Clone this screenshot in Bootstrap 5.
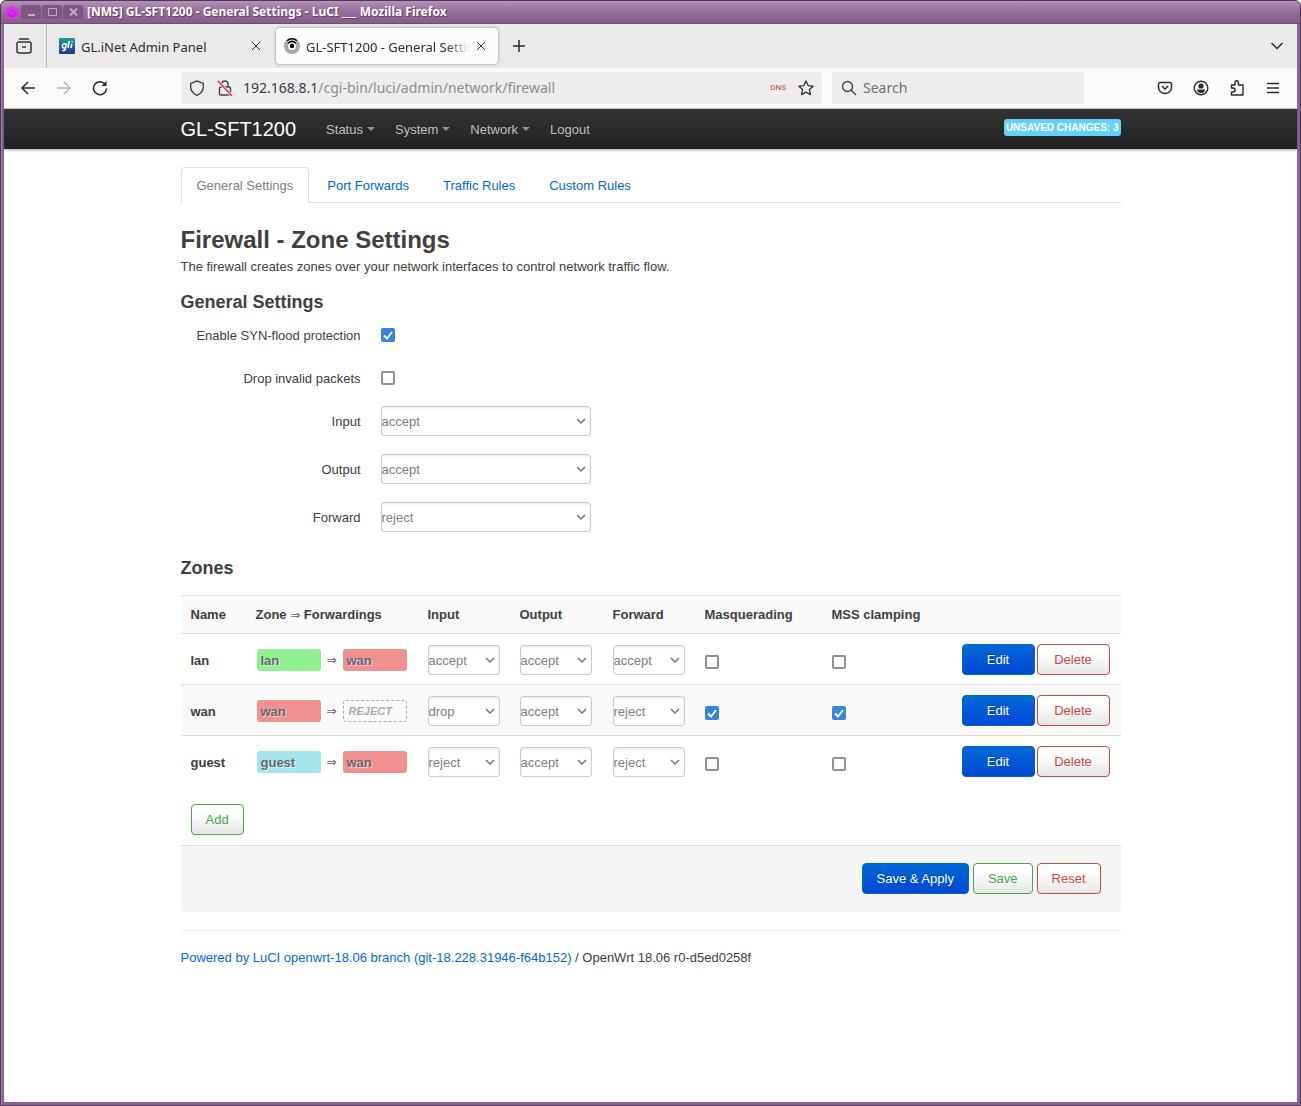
<!DOCTYPE html>
<html lang="en">
<head>
<meta charset="utf-8">
<meta name="viewport" content="width=device-width, initial-scale=1">
<title>GL-SFT1200 - General Settings - LuCI</title>
<link rel="stylesheet" href="https://cdn.jsdelivr.net/npm/bootstrap@5.3.0/dist/css/bootstrap.min.css">
<style>
  body { font-family: "Liberation Sans", Arial, sans-serif; font-size: 13px; line-height: 18px; color: #404040; background: #fff; }
  a { color: #0069d6; text-decoration: none; }
  svg { display: block; flex: none; }
  .ui-font { font-family: "Noto Sans", sans-serif; }

  /* window frame */
  .win { border: 1px solid #4f3455; padding: 0 3px 3px; background: #8c6693; border-radius: 6px 6px 0 0; box-shadow: inset 1px 0 0 #a581aa; min-height: 100vh; }
  .win-title { height: 23px; margin: 0 -3px; padding-left: 4px; background: linear-gradient(#b493b9, #9a729f 40%, #865c89); border-bottom: 1px solid #714a75; border-radius: 5px 5px 0 0; color: #fff; font-size: 12px; font-weight: 700; text-shadow: 1px 1px 1px #5a3a5e; }
  .win-btns { gap: 1px; margin: 0 4px 0 2px; }
  .win-btn { width: 20px; height: 14px; border: 0; border-radius: 2px; padding: 0; background: #7e5683; color: #c9a5cf; }
  .win-page { background: #fff; }

  /* browser tabs and toolbar */
  .strip { height: 44px; background: #eaeaea; color: #2b2a33; font-size: 13px; }
  .strip-first { width: 43px; border-right: 1px solid #bcbcbc; padding-left: 12px; }
  .tab-item { height: 36px; gap: 6px; padding: 0 12px 0 8px; border-radius: 4px; line-height: 20px; }
  .tab-item .tab-text { padding-top: 1px; }
  .tab-one { width: 222px; margin-left: 4px; }
  .tab-two { width: 222px; margin-left: 3px; background: #fcfcfc; box-shadow: 0 0 3px rgba(0,0,0,.45); }
  .tab-text { white-space: nowrap; overflow: hidden; }
  .tab-fade { -webkit-mask-image: linear-gradient(90deg, #000 85%, transparent); mask-image: linear-gradient(90deg, #000 85%, transparent); }
  .plain-btn { border: 0; background: none; padding: 0; color: #2b2a33; display: flex; align-items: center; justify-content: center; }
  .tool-btn { width: 36px; height: 32px; flex: none; }
  .new-tab { width: 32px; margin-left: 5px; }
  .list-tabs { width: 36px; margin: 0 2px 0 auto; }
  .toolbar-row { height: 41px; padding: 0 6px; background: #fbfbfb; border-bottom: 1px solid #ccc; }
  .field-box { height: 32px; background: #ededed; border-radius: 4px; font-size: 14px; color: #3a3a42; }
  .field-url { margin-left: 63px; padding: 0 8px; gap: 12px; }
  .field-url label { margin-left: -2px; }
  .field-find { width: 252px; margin: 0 63px 0 10px; padding: 0 9px; gap: 6px; }
  .field-box input { border: 0; background: none; padding: 0; outline: 0; color: #8c8c90; min-width: 0; }
  .field-box input::placeholder { color: #707075; opacity: 1; }
  .dns { font-family: Roboto, sans-serif; font-size: 8px; color: #c4474b; }

  /* site header */
  .site-nav { height: 40px; background: linear-gradient(#333, #222); box-shadow: 0 1px 3px rgba(0,0,0,.35); }
  .page-wrap { max-width: 940px; margin: 0 auto; }
  .site-nav .navbar-brand { font-size: 20px; line-height: 38px; color: #fff; margin: 0 20px 0 0; padding: 0; }
  .site-nav .nav-link { padding: 2px 10px 0; line-height: 38px; font-size: 13px; color: #bfbfbf; }
  .site-nav .dropdown-toggle::after { margin-left: 4px; border-width: 4px 4px 0; color: #8f8f8f; vertical-align: 3px; }
  .changes { background: #62cffc; color: #fff; font-size: 10px; font-weight: 700; line-height: 17px; padding: 0 2px; border-radius: 3px; margin-bottom: 3px; }

  /* content */
  .main-col { padding: 18px 0 120px; }
  .nav-tabs { border-color: #ddd; margin-bottom: 19px; }
  .nav-tabs .nav-link { padding: 2px 15px 0; line-height: 32px; margin-right: 2px; border-radius: 4px 4px 0 0; color: #0069d6; }
  .nav-tabs .nav-link.active { color: #808080; border-color: #ddd #ddd #fff; }
  h2, h3 { font-weight: 700; line-height: 36px; margin: 0; color: #404040; }
  h2 { font-size: 24px; }
  h3 { font-size: 18px; }
  .form-line { min-height: 30px; margin-bottom: 18px; gap: 20px; }
  .form-line.tick { margin-bottom: 13px; }
  .form-line label { width: 180px; text-align: right; padding-top: 2px; }
  .form-select { height: 30px; padding: 2px 0 0; font-size: 13px; line-height: 18px; color: #808080; border: 1px solid #ccc; border-radius: 3px; box-shadow: inset 0 1px 3px rgba(0,0,0,.1); width: 210px;
    background: #fff url("data:image/svg+xml,%3Csvg xmlns='http://www.w3.org/2000/svg' viewBox='0 0 10 6'%3E%3Cpath d='M1 1l4 4 4-4' fill='none' stroke='%23777' stroke-width='1.5'/%3E%3C/svg%3E") no-repeat right 4px center / 10px 6px; }
  .form-check-input { width: 14px; height: 14px; margin: 0; border: 2px solid #8f8f9d; border-radius: 2px !important; display: block; }
  .form-check-input:checked { background-color: #3584e4; border-color: #3584e4; background-size: 14px 14px; background-origin: border-box;
    background-image: url("data:image/svg+xml,%3Csvg xmlns='http://www.w3.org/2000/svg' viewBox='0 0 14 14'%3E%3Cpath d='M3 7.500l3 3L11 4' fill='none' stroke='white' stroke-width='2'/%3E%3C/svg%3E") !important; }
  .zones { table-layout: fixed; width: 100%; margin: 9px 0 0; color: #404040; }
  .zones th, .zones td { padding: 0 0 0 10px; vertical-align: middle; border-top: 1px solid #ddd; border-bottom: 0; text-align: left; font-size: 13px; }
  .zones thead th { height: 38px; background: #f9f9f9; }
  .zones tbody td, .zones tbody th { height: 51px; padding-top: 2px; }
  .zones tbody th { padding-top: 4px; }
  .zones tbody td:last-child { padding-top: 0; }
  .zones tbody tr:nth-child(2) > * { background: #f9f9f9; }
  .zones .form-select { width: 72px; }
  .zones .form-check-input { margin-top: 3px; }
  .zone-pair { padding-left: 1px; }
  .zone { width: 64px; height: 22px; line-height: 23px; padding: 0 4px; border-radius: 3px; font-weight: 700; color: #666; text-shadow: 1px 1px 1px rgba(255,255,255,.7); }
  .zone-lan { background: #90f090; }
  .zone-wan { background: #f09090; }
  .zone-guest { background: #a3e6ea; }
  .zone-none { border: 1px dashed #aaa; line-height: 21px; padding: 0 5px; font-size: 11px; font-style: italic; color: #aaa; }
  .arrow { width: 22px; text-align: center; }
  .arrow, .arrow-head { font-family: "DejaVu Sans", sans-serif; font-size: 12px; font-weight: 400; color: #666; line-height: 18px; }
  .cbtn { height: 31px; padding: 2px 14px 0; font-size: 13px; line-height: 18px; border-radius: 4px; border: 1px solid; background: linear-gradient(#fff, #fff 25%, #e6e6e6); text-shadow: 0 1px 1px rgba(255,255,255,.75); }
  .cbtn-green, .cbtn-green:hover { color: #46a546; border-color: #46a546; }
  .cbtn-red, .cbtn-red:hover { color: #cf4644; border-color: #cf4644; }
  .cbtn-blue, .cbtn-blue:hover { color: #fff; border-color: #0064cd; background: linear-gradient(#0069d6, #0048d6); text-shadow: 0 -1px 0 rgba(0,0,0,.25); }
  .cell-btns { gap: 2px; }
  .cell-btns .cbtn { width: 73px; }
  .add-row { padding: 17px 10px 10px; }
  .page-acts { background: #f5f5f5; border-top: 1px solid #ddd; padding: 17px 20px 18px; gap: 4px; border-radius: 0 0 3px 3px; }
  .foot { margin-top: 18px; padding-top: 18px; border-top: 1px solid #eee; }
</style>
</head>
<body>
<div class="win d-flex flex-column">
  <div class="win-title ui-font d-flex align-items-center">
    <svg width="14" height="14" viewBox="0 0 14 14"><path d="M6.500 0Q9 1.500 9.500 3.500L10.500 2Q14 5 13.500 8.500 12.500 14 7 14 .5 13.500.5 7.500.5 5 2 2.500L3 4Q5.500 3.500 6.500 0z" fill="#e22cf5"/><path d="M5 6q1.500 1.500 3.500 0 1.500 3-1 4.500Q5 11 3.500 8.500 3.500 12 7 12q4.500-.5 4-5" fill="none" stroke="#b71fd6" stroke-width="1"/></svg>
    <div class="win-btns d-flex">
      <button class="win-btn" aria-label="Minimize"><svg width="20" height="14"><path d="M7 10h7" stroke="currentColor" stroke-width="2"/></svg></button>
      <button class="win-btn" aria-label="Maximize"><svg width="20" height="14"><path d="M6.500 3.500h8v7h-8z" fill="none" stroke="currentColor"/></svg></button>
      <button class="win-btn" aria-label="Close"><svg width="20" height="14"><path d="M7 3.500l7 7M14 3.500l-7 7" stroke="currentColor" stroke-width="2"/></svg></button>
    </div>
    <span class="text-nowrap">[NMS] GL-SFT1200 - General Settings - LuCI ___ Mozilla Firefox</span>
  </div>

  <div class="win-page flex-grow-1">
    <div class="strip ui-font d-flex align-items-center">
      <div class="strip-first h-100 d-flex align-items-center">
        <button class="plain-btn" aria-label="All tabs"><svg width="16" height="16" viewBox="0 0 16 16" fill="none" stroke="#333" stroke-width="1.500" stroke-linecap="round"><path d="M3.500 1h9M2.500 4h11a1.500 1.500 0 0 1 1.500 1.500V13a2 2 0 0 1-2 2H3a2 2 0 0 1-2-2V5.500A1.500 1.500 0 0 1 2.500 4zM6.500 9h3"/></svg></button>
      </div>
      <div class="tab-item tab-one d-flex align-items-center">
        <svg width="16" height="16" viewBox="0 0 16 16"><defs><linearGradient id="gl" x2="0" y2="1"><stop stop-color="#16a093"/><stop offset="1" stop-color="#2c3190"/></linearGradient></defs><rect width="16" height="16" rx="1" fill="url(#gl)"/><g fill="none" stroke="#fff" stroke-width="1.500"><path d="M7.500 5.500L6.300 11q-.5 2-3 1.500M7 6.200Q4 4.500 3.300 8q-.3 2.500 3 1.500M10.300 3L9 10M12.800 6L12 10M13.200 3.300v1.200"/></g></svg>
        <span class="tab-text flex-grow-1">GL.iNet Admin Panel</span>
        <button class="plain-btn" aria-label="Close tab"><svg width="10" height="10"><path d="M1 1l8 8M9 1L1 9" stroke="#333"/></svg></button>
      </div>
      <div class="tab-item tab-two d-flex align-items-center">
        <svg width="16" height="16" viewBox="0 0 16 16"><circle cx="8" cy="8" r="8" fill="#a6a6aa"/><circle cx="8" cy="8" r="4" fill="#fff"/><circle cx="8" cy="8" r="2.200"/><path d="M3.500 4Q8-.5 12.500 4" fill="none" stroke="#fff" stroke-width="3"/><path d="M3 2.800Q8-1.200 13 2.800M4 5.200Q8 1.600 12 5.200" fill="none" stroke="#000" stroke-width="1.500"/></svg>
        <span class="tab-text tab-fade flex-grow-1">GL-SFT1200 - General Settings</span>
        <button class="plain-btn" aria-label="Close tab"><svg width="10" height="10"><path d="M1 1l8 8M9 1L1 9" stroke="#333"/></svg></button>
      </div>
      <button class="plain-btn new-tab" aria-label="New tab"><svg width="12" height="12"><path d="M6 0v12M0 6h12" stroke="#2b2a33" stroke-width="1.500"/></svg></button>
      <button class="plain-btn list-tabs" aria-label="List tabs"><svg width="12" height="8"><path d="M.5 1L6 6.500 11.500 1" fill="none" stroke="#2b2a33" stroke-width="1.500"/></svg></button>
    </div>

    <div class="toolbar-row ui-font d-flex align-items-center">
      <button class="plain-btn tool-btn" aria-label="Back"><svg width="16" height="16" fill="none" stroke="#2b2a33" stroke-width="1.500"><path d="M15 8H2M8 2L2 8l6 6"/></svg></button>
      <button class="plain-btn tool-btn" aria-label="Forward"><svg width="16" height="16" fill="none" stroke="#b4b4b8" stroke-width="1.500"><path d="M1 8h13M8 2l6 6-6 6"/></svg></button>
      <button class="plain-btn tool-btn" aria-label="Reload"><svg width="16" height="16" fill="none" stroke="#2b2a33" stroke-width="1.500"><path d="M13 4A6.500 6.500 0 1 0 14.500 8.500"/><path d="M14.500 1v5h-5z" fill="#2b2a33" stroke="none"/></svg></button>
      <div class="field-box field-url d-flex align-items-center flex-grow-1">
        <svg width="16" height="16" fill="none" stroke="#444" stroke-width="1.400" stroke-linejoin="round"><path d="M8 1l6.300 2.300V7q0 5.500-6.300 8.400Q1.700 12.500 1.700 7V3.300z"/></svg>
        <svg width="16" height="16" fill="none" stroke="#444" stroke-width="1.400"><rect x="2.500" y="7" width="11" height="8" rx="1.500"/><path d="M5 7V4a3 3 0 0 1 6 0v3"/><path d="M1 1l14 15" stroke="#ededed" stroke-width="3"/><path d="M1 1l14 15" stroke="#e8274f"/></svg>
        <label class="d-flex flex-grow-1"><span>192.168.8.1</span><input class="flex-grow-1" type="text" value="/cgi-bin/luci/admin/network/firewall" aria-label="Address"></label>
        <span class="dns">DNS</span>
        <button class="plain-btn" aria-label="Bookmark"><svg width="16" height="16" fill="none" stroke="#333" stroke-width="1.300" stroke-linejoin="round"><path d="M8 1l2.100 4.600 5 .6-3.700 3.400 1 5L8 12.100 3.600 14.600l1-5L.9 6.200l5-.6z"/></svg></button>
      </div>
      <label class="field-box field-find d-flex align-items-center">
        <svg width="16" height="16" fill="none" stroke="#444" stroke-width="1.400"><circle cx="6.500" cy="6.500" r="5"/><path d="M10 10l5 5"/></svg>
        <input type="search" class="flex-grow-1" placeholder="Search" aria-label="Search">
      </label>
      <button class="plain-btn tool-btn" aria-label="Pocket"><svg width="16" height="16" fill="none" stroke="#2b2a33" stroke-width="1.500"><path d="M3 2.500h10a1.500 1.500 0 0 1 1.500 1.500v3.500a6.500 6 0 0 1-13 0V4A1.500 1.500 0 0 1 3 2.500zM4.800 6L8 9l3.200-3"/></svg></button>
      <button class="plain-btn tool-btn" aria-label="Account"><svg width="16" height="16"><circle cx="8" cy="8" r="6.800" fill="none" stroke="#2b2a33" stroke-width="1.400"/><circle cx="8" cy="6" r="2.600" fill="#2b2a33"/><path d="M4 9.500h8q0 3.500-4 3.500T4 9.500z" fill="#2b2a33"/></svg></button>
      <button class="plain-btn tool-btn" aria-label="Extensions"><svg width="16" height="16" fill="none" stroke="#2b2a33" stroke-width="1.400" stroke-linejoin="round"><path d="M2.500 8V5H6V2.500a1.700 1.700 0 0 1 3.400 0V5H14v10H2.500v-3H4a2 2 0 0 0 0-4z"/></svg></button>
      <button class="plain-btn tool-btn" aria-label="Menu"><svg width="12" height="12"><path d="M0 1.500h12M0 6h12M0 10.500h12" stroke="#2b2a33" stroke-width="1.300"/></svg></button>
    </div>

    <header class="site-nav">
      <div class="page-wrap d-flex align-items-center">
        <a class="navbar-brand" href="#">GL-SFT1200</a>
        <nav class="nav">
          <a class="nav-link dropdown-toggle" href="#">Status</a>
          <a class="nav-link dropdown-toggle" href="#">System</a>
          <a class="nav-link dropdown-toggle" href="#">Network</a>
          <a class="nav-link" href="#">Logout</a>
        </nav>
        <a class="changes ms-auto text-uppercase" href="#">Unsaved Changes: 3</a>
      </div>
    </header>

    <main class="page-wrap main-col">
      <ul class="nav nav-tabs">
        <li class="nav-item"><a class="nav-link active" href="#">General Settings</a></li>
        <li class="nav-item"><a class="nav-link" href="#">Port Forwards</a></li>
        <li class="nav-item"><a class="nav-link" href="#">Traffic Rules</a></li>
        <li class="nav-item"><a class="nav-link" href="#">Custom Rules</a></li>
      </ul>
      <h2>Firewall - Zone Settings</h2>
      <div class="mb-2">The firewall creates zones over your network interfaces to control network traffic flow.</div>

      <h3>General Settings</h3>
      <div class="form-line tick d-flex align-items-center"><label for="syn">Enable SYN-flood protection</label><input class="form-check-input" type="checkbox" id="syn" checked></div>
      <div class="form-line tick d-flex align-items-center"><label for="inv">Drop invalid packets</label><input class="form-check-input" type="checkbox" id="inv"></div>
      <div class="form-line d-flex align-items-center"><label for="gin">Input</label><select class="form-select" id="gin"><option>accept</option></select></div>
      <div class="form-line d-flex align-items-center"><label for="gout">Output</label><select class="form-select" id="gout"><option>accept</option></select></div>
      <div class="form-line d-flex align-items-center"><label for="gfwd">Forward</label><select class="form-select" id="gfwd"><option>reject</option></select></div>

      <h3>Zones</h3>
      <table class="zones">
        <colgroup><col style="width:65px"><col style="width:172px"><col style="width:92px"><col style="width:93px"><col style="width:92px"><col style="width:127px"><col style="width:130px"><col></colgroup>
        <thead><tr><th>Name</th><th>Zone <span class="arrow-head">⇒</span> Forwardings</th><th>Input</th><th>Output</th><th>Forward</th><th>Masquerading</th><th>MSS clamping</th><th></th></tr></thead>
        <tbody>
          <tr>
            <th>lan</th>
            <td><div class="zone-pair d-flex align-items-center"><span class="zone zone-lan">lan</span><span class="arrow">⇒</span><span class="zone zone-wan">wan</span></div></td>
            <td><select class="form-select" aria-label="lan input"><option>accept</option></select></td>
            <td><select class="form-select" aria-label="lan output"><option>accept</option></select></td>
            <td><select class="form-select" aria-label="lan forward"><option>accept</option></select></td>
            <td><input class="form-check-input" type="checkbox" aria-label="lan masquerading"></td>
            <td><input class="form-check-input" type="checkbox" aria-label="lan MSS clamping"></td>
            <td><div class="cell-btns d-flex"><button class="btn cbtn cbtn-blue">Edit</button><button class="btn cbtn cbtn-red">Delete</button></div></td>
          </tr>
          <tr>
            <th>wan</th>
            <td><div class="zone-pair d-flex align-items-center"><span class="zone zone-wan">wan</span><span class="arrow">⇒</span><span class="zone zone-none">REJECT</span></div></td>
            <td><select class="form-select" aria-label="wan input"><option>drop</option></select></td>
            <td><select class="form-select" aria-label="wan output"><option>accept</option></select></td>
            <td><select class="form-select" aria-label="wan forward"><option>reject</option></select></td>
            <td><input class="form-check-input" type="checkbox" checked aria-label="wan masquerading"></td>
            <td><input class="form-check-input" type="checkbox" checked aria-label="wan MSS clamping"></td>
            <td><div class="cell-btns d-flex"><button class="btn cbtn cbtn-blue">Edit</button><button class="btn cbtn cbtn-red">Delete</button></div></td>
          </tr>
          <tr>
            <th>guest</th>
            <td><div class="zone-pair d-flex align-items-center"><span class="zone zone-guest">guest</span><span class="arrow">⇒</span><span class="zone zone-wan">wan</span></div></td>
            <td><select class="form-select" aria-label="guest input"><option>reject</option></select></td>
            <td><select class="form-select" aria-label="guest output"><option>accept</option></select></td>
            <td><select class="form-select" aria-label="guest forward"><option>reject</option></select></td>
            <td><input class="form-check-input" type="checkbox" aria-label="guest masquerading"></td>
            <td><input class="form-check-input" type="checkbox" aria-label="guest MSS clamping"></td>
            <td><div class="cell-btns d-flex"><button class="btn cbtn cbtn-blue">Edit</button><button class="btn cbtn cbtn-red">Delete</button></div></td>
          </tr>
        </tbody>
      </table>
      <div class="add-row d-flex"><button class="btn cbtn cbtn-green">Add</button></div>
      <div class="page-acts d-flex justify-content-end">
        <button class="btn cbtn cbtn-blue">Save &amp; Apply</button><button class="btn cbtn cbtn-green">Save</button><button class="btn cbtn cbtn-red">Reset</button>
      </div>
      <footer class="foot"><a href="#">Powered by LuCI openwrt-18.06 branch (git-18.228.31946-f64b152)</a> / OpenWrt 18.06 r0-d5ed0258f</footer>
    </main>
  </div>
</div>
<script src="https://cdn.jsdelivr.net/npm/bootstrap@5.3.0/dist/js/bootstrap.bundle.min.js"></script>
</body>
</html>
